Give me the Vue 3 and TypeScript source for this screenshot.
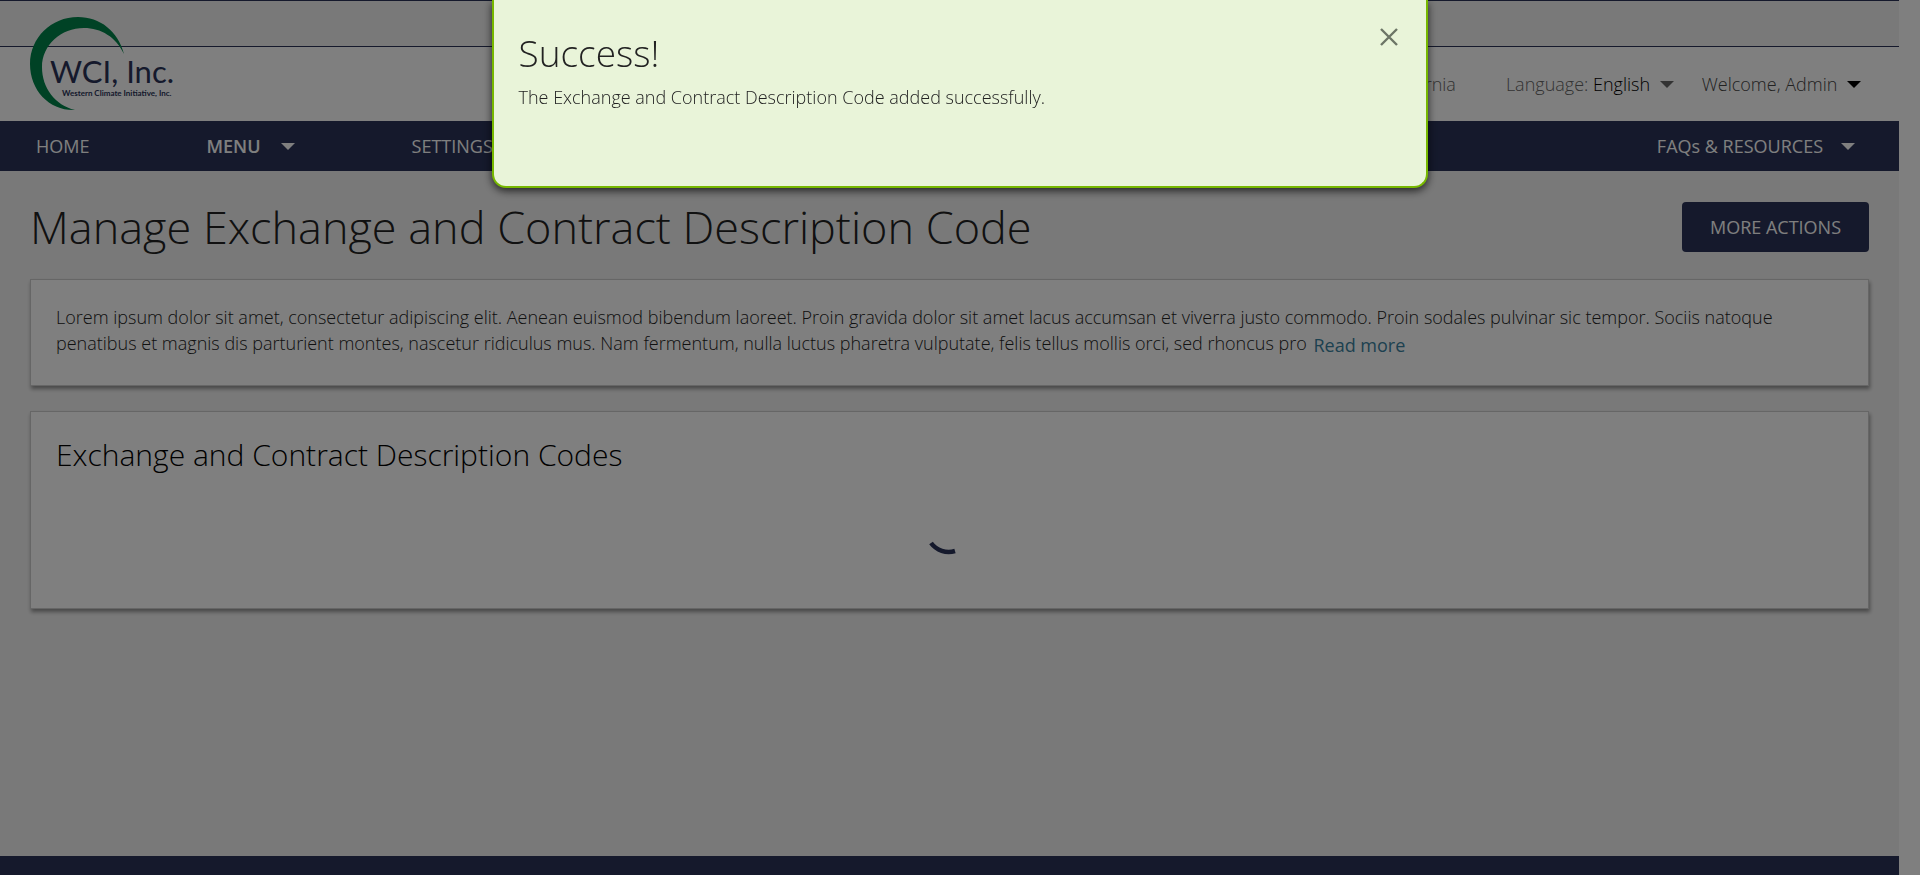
<script setup lang="ts">
import { ref } from 'vue'

interface NavItem { label: string; menu: boolean; strong: boolean }

const navItems: NavItem[] = [
  { label: 'HOME', menu: false, strong: false },
  { label: 'MENU', menu: true, strong: true },
  { label: 'SETTINGS', menu: false, strong: false },
]
const noticeOpen = ref(true)
</script>

<template>
  <div class="page">
    <div class="site">
      <header class="header">
        <div class="topbar"></div>
        <div class="masthead">
          <a class="logo" href="#" aria-label="WCI, Inc. home">
            <svg width="170" height="96" viewBox="0 0 170 96">
              <path
                fill="#00844a"
                d="M94 37C88 14 70 0 48 0C21 0 0 21 0 47C0 74 20 94 45 93C25 88 12 71 12 50C12 28 31 11 54 11C71 11 86 20 94 37Z"
              />
              <text x="20" y="66" class="logo-name">WCI, Inc.</text>
              <text x="32" y="79" class="logo-sub">Western Climate Initiative, Inc.</text>
            </svg>
          </a>
          <div class="user-links">
            <span class="jurisdiction">California</span>
            <button class="link language" type="button">
              <span class="muted">Language:</span> English <i class="caret soft"></i>
            </button>
            <button class="link welcome" type="button">Welcome, Admin <i class="caret dark"></i></button>
          </div>
        </div>
      </header>

      <nav class="nav">
        <ul class="nav-list">
          <li v-for="item in navItems" :key="item.label">
            <button v-if="item.menu" type="button" class="nav-item" :class="{ strong: item.strong }">
              {{ item.label }}<i class="caret light"></i>
            </button>
            <a v-else href="#" class="nav-item">{{ item.label }}</a>
          </li>
        </ul>
        <button type="button" class="nav-item">FAQs &amp; RESOURCES<i class="caret light near"></i></button>
      </nav>

      <main class="main">
        <div class="title-row">
          <h1>Manage Exchange and Contract Description Code</h1>
          <button type="button" class="primary">MORE ACTIONS</button>
        </div>
        <section class="card intro">
          <p>
            Lorem ipsum dolor sit amet, consectetur adipiscing elit. Aenean euismod bibendum laoreet. Proin gravida dolor sit amet lacus accumsan et viverra justo commodo. Proin sodales pulvinar sic tempor. Sociis natoque penatibus et magnis dis parturient montes, nascetur ridiculus mus. Nam fermentum, nulla luctus pharetra vulputate, felis tellus mollis orci, sed rhoncus pro
            <a href="#" class="read-more">Read more</a>
          </p>
        </section>
        <section class="card codes">
          <h2>Exchange and Contract Description Codes</h2>
          <div class="loading" role="status" aria-label="Loading">
            <svg width="48" height="48" viewBox="0 0 48 48">
              <path d="M5 33A22 22 0 0 0 29 41" fill="none" stroke="#2a3358" stroke-width="4.5" />
            </svg>
          </div>
        </section>
      </main>

      <footer class="footer"></footer>
    </div>

    <div v-if="noticeOpen" class="overlay">
      <div class="notice" role="alertdialog" aria-labelledby="notice-title">
        <div class="notice-text">
          <h2 id="notice-title">Success!</h2>
          <p>The Exchange and Contract Description Code added successfully.</p>
        </div>
        <button type="button" class="close" aria-label="Close" @click="noticeOpen = false">
          <svg width="18" height="18" viewBox="0 0 18 18">
            <path d="M1 1L17 17M17 1L1 17" stroke="#6c7566" stroke-width="2.4" fill="none" />
          </svg>
        </button>
      </div>
    </div>
  </div>
</template>

<style>
body {
  background: #fff;
}
</style>

<style scoped>
.page {
  height: 100vh;
  overflow: hidden;
  font-family: 'Open Sans', 'Liberation Sans', sans-serif;
  font-size: 18px;
  font-weight: 300;
  line-height: 26px;
  color: #222;
}
.page * {
  box-sizing: border-box;
}
button {
  font: inherit;
  border: 0;
  background: none;
  padding: 0;
  cursor: pointer;
}
a {
  text-decoration: none;
}
.site {
  display: flex;
  flex-direction: column;
  height: 100%;
  margin-right: 21px;
  background: #f3f3f3;
}
.topbar {
  height: 47px;
  border-top: 1px solid #2a3358;
  border-bottom: 1px solid #2a3358;
}
.masthead {
  display: flex;
  justify-content: space-between;
  align-items: center;
  height: 74px;
  padding: 0 38px 0 30px;
  background: #fff;
}
.logo {
  display: block;
  margin-top: -38px;
}
.logo svg {
  display: block;
}
.logo-name {
  font-family: Lato, sans-serif;
  font-size: 31px;
  font-weight: 400;
  fill: #2a3358;
}
.logo-sub {
  font-family: Lato, sans-serif;
  font-size: 8px;
  font-weight: 700;
  fill: #2a3358;
}
.user-links {
  display: flex;
  align-items: center;
}
.jurisdiction,
.muted {
  color: #666;
}
.link {
  display: flex;
  align-items: center;
  white-space: pre;
}
.language {
  margin-left: 50px;
  color: #000;
}
.welcome {
  margin-left: 28px;
  color: #444;
}
.caret {
  width: 0;
  height: 0;
  border: 7px solid transparent;
  border-top-color: currentColor;
  border-bottom: 0;
}
.caret.soft {
  margin-left: 5px;
  color: #666;
}
.caret.dark {
  margin-left: 5px;
  color: #000;
}
.caret.light {
  margin-left: 20px;
}
.caret.near {
  margin-left: 18px;
}
.nav {
  display: flex;
  justify-content: space-between;
  align-items: center;
  height: 50px;
  padding: 0 44px 0 36px;
  background: #2a3358;
}
.nav-list {
  display: flex;
  gap: 117px;
  margin: 0;
  padding: 0;
  list-style: none;
}
.nav-item {
  display: flex;
  align-items: center;
  font-weight: 400;
  color: #fff;
}
.strong {
  font-weight: 600;
}
.main {
  flex: 1;
  padding: 31px 30px 0;
}
.title-row {
  display: flex;
  justify-content: space-between;
  align-items: center;
}
h1,
h2 {
  margin: 0;
  font-weight: 300;
}
h1 {
  font-size: 45px;
  line-height: 50px;
}
.primary {
  height: 50px;
  padding: 0 28px;
  border-radius: 4px;
  background: #2a3358;
  font-weight: 400;
  color: #fff;
}
.card {
  padding: 24px 25px;
  border: 1px solid #ccc;
  background: #fff;
  box-shadow: 1px 3px 4px rgba(0, 0, 0, 0.4);
}
.intro {
  min-height: 107px;
  margin-top: 27px;
}
.intro p {
  margin: 0;
}
.read-more {
  display: inline-block;
  margin-left: 2px;
  vertical-align: middle;
  font-weight: 400;
  color: #3b82a0;
}
.codes {
  min-height: 198px;
  margin-top: 25px;
  color: #000;
}
.codes h2 {
  font-size: 30px;
  line-height: 38px;
}
.loading {
  display: flex;
  justify-content: center;
  margin-top: 36px;
}
.footer {
  flex: none;
  height: 19px;
  background: #2a3358;
}
.overlay {
  position: fixed;
  inset: 0;
  display: flex;
  justify-content: center;
  align-items: flex-start;
  background: rgba(0, 0, 0, 0.5);
}
.notice {
  display: flex;
  justify-content: space-between;
  align-items: flex-start;
  width: 48.8%;
  min-height: 188px;
  padding: 28px 28px 0 25px;
  border: 2px solid #77b800;
  border-top: 0;
  border-radius: 0 0 14px 14px;
  background: #e9f4d9;
  box-shadow: 0 3px 8px rgba(0, 0, 0, 0.7);
}
.notice h2 {
  font-size: 37px;
  line-height: 50px;
}
.notice p {
  margin: 6px 0 0;
}
.close {
  line-height: 0;
}
</style>
